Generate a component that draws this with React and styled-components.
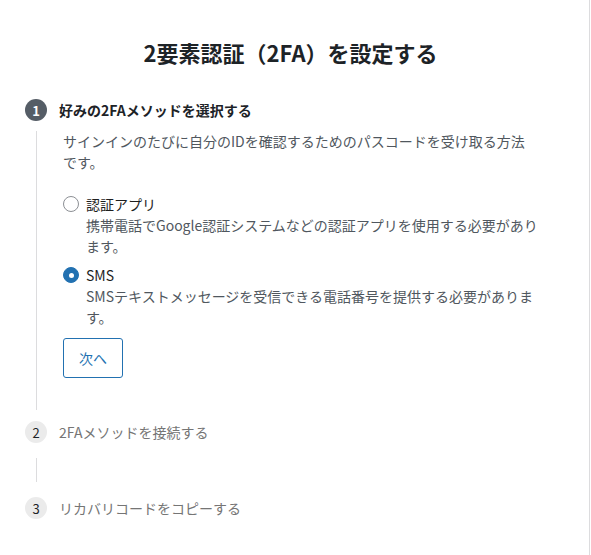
import styled, { createGlobalStyle } from "styled-components";

const GlobalStyle = createGlobalStyle`
    body {
        margin: 0;
        background: #fff;
        font-family: "Noto Sans CJK JP", "Noto Sans", sans-serif;
        color: #1d2327;
    }
`;

const steps = [
    { num: 1, title: "好みの2FAメソッドを選択する", active: true },
    { num: 2, title: "2FAメソッドを接続する" },
    { num: 3, title: "リカバリコードをコピーする" },
];

const options = [
    {
        id: "app",
        label: "認証アプリ",
        desc: "携帯電話でGoogle認証システムなどの認証アプリを使用する必要があります。",
    },
    {
        id: "sms",
        label: "SMS",
        desc: "SMSテキストメッセージを受信できる電話番号を提供する必要があります。",
        checked: true,
    },
];

const App = () => {
    return (
        <Page>
            <GlobalStyle />
            <Title>2要素認証（2FA）を設定する</Title>
            <Stepper>
                {steps.map((step, i) => (
                    <Step key={step.num}>
                        <StepHeader>
                            <StepNumber $active={step.active}>{step.num}</StepNumber>
                            <StepTitle $active={step.active}>{step.title}</StepTitle>
                        </StepHeader>
                        {step.active && (
                            <StepBody>
                                <Description>
                                    サインインのたびに自分のIDを確認するためのパスコードを受け取る方法です。
                                </Description>
                                <OptionList>
                                    {options.map((opt) => (
                                        <Option key={opt.id}>
                                            <Radio $checked={opt.checked} />
                                            <OptionText>
                                                <OptionLabel>{opt.label}</OptionLabel>
                                                <OptionDesc>{opt.desc}</OptionDesc>
                                            </OptionText>
                                        </Option>
                                    ))}
                                </OptionList>
                                <NextButton>次へ</NextButton>
                            </StepBody>
                        )}
                        {!step.active && i < steps.length - 1 && <StepBody $empty />}
                    </Step>
                ))}
            </Stepper>
        </Page>
    );
};

export default App;

const Page = styled.div`
    width: 590px;
    min-height: 555px;
    box-sizing: border-box;
    border-right: 1px solid #dcdcde;
    padding: 37px 0 0 25px;
`;

const Title = styled.h1`
    margin: 0 0 31px;
    padding-right: 33px;
    text-align: center;
    font-size: 22px;
    line-height: 31px;
    font-weight: 700;
    color: #1d2327;
`;

const Stepper = styled.div`
    display: flex;
    flex-direction: column;
`;

const Step = styled.div`
    display: flex;
    flex-direction: column;
`;

const StepHeader = styled.div`
    display: flex;
    align-items: center;
    gap: 12px;
    height: 22px;
`;

const StepNumber = styled.div`
    width: 22px;
    height: 22px;
    border-radius: 50%;
    display: flex;
    align-items: center;
    justify-content: center;
    font-size: 13px;
    font-weight: ${(p) => (p.$active ? 700 : 400)};
    background: ${(p) => (p.$active ? "#555d66" : "#ebebeb")};
    color: ${(p) => (p.$active ? "#fff" : "#1d2327")};
`;

const StepTitle = styled.div`
    font-size: 14px;
    font-weight: ${(p) => (p.$active ? 700 : 400)};
    color: ${(p) => (p.$active ? "#1d2327" : "#757575")};
`;

const StepBody = styled.div`
    margin: ${(p) => (p.$empty ? "15px 0 15px 11px" : "10px 0 11px 11px")};
    height: ${(p) => (p.$empty ? "24px" : "auto")};
    border-left: 1px solid #dcdcde;
    padding: ${(p) => (p.$empty ? "0" : "0 0 32px 26px")};
    width: 476px;
    box-sizing: content-box;
`;

const Description = styled.p`
    margin: 0 0 21px;
    max-width: 470px;
    font-size: 14px;
    line-height: 21px;
    color: #50575e;
`;

const OptionList = styled.div`
    display: flex;
    flex-direction: column;
    gap: 8px;
`;

const Option = styled.label`
    display: flex;
    align-items: flex-start;
    gap: 7px;
`;

const Radio = styled.span`
    flex: none;
    width: 16px;
    height: 16px;
    margin-top: 2px;
    border-radius: 50%;
    box-sizing: border-box;
    border: 1px solid ${(p) => (p.$checked ? "#2271b1" : "#8c8f94")};
    background: ${(p) => (p.$checked ? "#2271b1" : "#fff")};
    display: flex;
    align-items: center;
    justify-content: center;

    &::after {
        content: "";
        display: ${(p) => (p.$checked ? "block" : "none")};
        width: 5px;
        height: 5px;
        border-radius: 50%;
        background: #fff;
    }
`;

const OptionText = styled.div`
    display: flex;
    flex-direction: column;
`;

const OptionLabel = styled.span`
    font-size: 14px;
    line-height: 21px;
    color: #1e1e1e;
`;

const OptionDesc = styled.span`
    font-size: 14px;
    line-height: 21px;
    color: #50575e;
`;

const NextButton = styled.button`
    margin-top: 10px;
    width: 60px;
    height: 40px;
    border: 1px solid #2271b1;
    border-radius: 3px;
    background: #fff;
    color: #2271b1;
    font-family: inherit;
    font-size: 14px;
    cursor: pointer;
`;
